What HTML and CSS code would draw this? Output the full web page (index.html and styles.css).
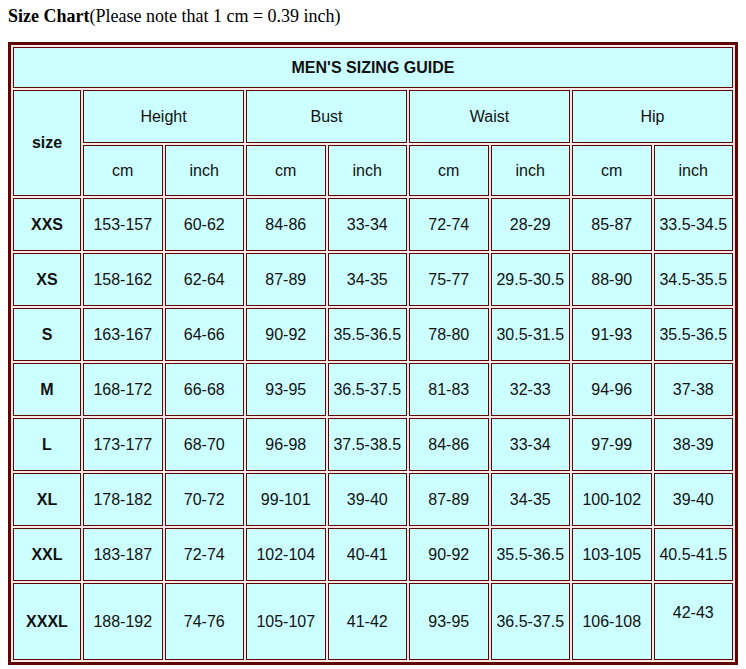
FILE: index.html
```html
<!DOCTYPE html>
<html>
<head>
<meta charset="utf-8">
<link rel="stylesheet" href="styles.css">
</head>
<body>
<div class="title"><b>Size Chart</b>(Please note that 1 cm = 0.39 inch)</div>
<table class="chart">
  <colgroup>
    <col class="c-size">
    <col><col><col><col><col><col><col><col>
  </colgroup>
  <tr class="r-head"><td colspan="9" class="b">MEN'S SIZING GUIDE</td></tr>
  <tr class="r-group">
    <td rowspan="2" class="b">size</td>
    <td colspan="2">Height</td>
    <td colspan="2">Bust</td>
    <td colspan="2">Waist</td>
    <td colspan="2">Hip</td>
  </tr>
  <tr class="r-unit">
    <td>cm</td><td>inch</td><td>cm</td><td>inch</td><td>cm</td><td>inch</td><td>cm</td><td>inch</td>
  </tr>
  <tr class="r-data"><td class="b">XXS</td><td>153-157</td><td>60-62</td><td>84-86</td><td>33-34</td><td>72-74</td><td>28-29</td><td>85-87</td><td>33.5-34.5</td></tr>
  <tr class="r-data"><td class="b">XS</td><td>158-162</td><td>62-64</td><td>87-89</td><td>34-35</td><td>75-77</td><td>29.5-30.5</td><td>88-90</td><td>34.5-35.5</td></tr>
  <tr class="r-data"><td class="b">S</td><td>163-167</td><td>64-66</td><td>90-92</td><td>35.5-36.5</td><td>78-80</td><td>30.5-31.5</td><td>91-93</td><td>35.5-36.5</td></tr>
  <tr class="r-data"><td class="b">M</td><td>168-172</td><td>66-68</td><td>93-95</td><td>36.5-37.5</td><td>81-83</td><td>32-33</td><td>94-96</td><td>37-38</td></tr>
  <tr class="r-data"><td class="b">L</td><td>173-177</td><td>68-70</td><td>96-98</td><td>37.5-38.5</td><td>84-86</td><td>33-34</td><td>97-99</td><td>38-39</td></tr>
  <tr class="r-data"><td class="b">XL</td><td>178-182</td><td>70-72</td><td>99-101</td><td>39-40</td><td>87-89</td><td>34-35</td><td>100-102</td><td>39-40</td></tr>
  <tr class="r-data"><td class="b">XXL</td><td>183-187</td><td>72-74</td><td>102-104</td><td>40-41</td><td>90-92</td><td>35.5-36.5</td><td>103-105</td><td>40.5-41.5</td></tr>
  <tr class="r-last"><td class="b">XXXL</td><td>188-192</td><td>74-76</td><td>105-107</td><td>41-42</td><td>93-95</td><td>36.5-37.5</td><td>106-108</td><td class="two">42-43<br>&nbsp;</td></tr>
</table>
</body>
</html>
```
FILE: styles.css
```css
html, body {
  background: #ffffff;
}
body {
  margin: 8px;
  font-family: "Liberation Serif", "Times New Roman", serif;
  font-size: 18px;
  color: #000;
}
.title {
  line-height: 20px;
  height: 20px;
  margin-top: -2px;
}
.chart {
  margin-top: 16px;
  width: 730px;
  table-layout: fixed;
  border-collapse: separate;
  border-spacing: 2px;
  border: 3px solid #5e0505;
  background: #fce6e6;
  font-family: "Liberation Sans", Arial, sans-serif;
  font-size: 16px;
}
.chart col.c-size {
  width: 68px;
}
.chart td {
  border: 1px solid #5e0505;
  background: #ccffff;
  text-align: center;
  vertical-align: middle;
  padding: 0;
  line-height: 18px;
  color: #111;
  white-space: nowrap;
}
.chart td.b {
  font-weight: bold;
}
.r-head td { height: 39px; }
.r-group td { height: 51px; }
.r-unit td { height: 49px; }
.r-data td { height: 51px; }
.r-last td { height: 75px; }
```
